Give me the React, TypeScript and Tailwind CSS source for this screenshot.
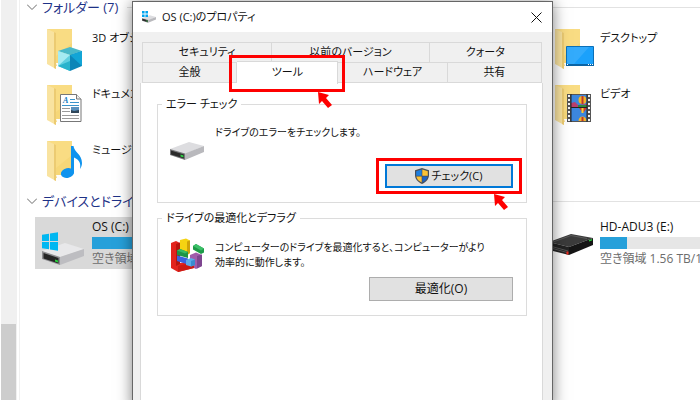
import React, { useState } from 'react'

const FolderBase = () => (
  <>
    <path d="M6 3h25v35l-16 2z" fill="#f6d778" />
    <path d="M6 3h25v14L15 30z" fill="#fbe08a" opacity=".6" />
    <path d="M15 37h16v1l-14 5z" fill="#fdfdfd" />
    <path d="M6 3l9 4v36l-9-5z" fill="#f9e3a0" />
    <path d="M13 6l2 1v36l-2-1z" fill="#eccb72" />
  </>
)

const CubeIcon = () => (
  <svg viewBox="0 0 48 48" className="size-12 shrink-0" aria-hidden="true">
    <FolderBase />
    <path d="M17 25l12-4 12 4-12 4z" fill="#49b9c9" />
    <path d="M17 25l12 4v16l-12-5z" fill="#5fcfe0" />
    <path d="M17 25l12 4-12 11z" fill="#a5ebf2" />
    <path d="M41 25l-12 4v16l12-5z" fill="#0d86b8" />
    <path d="M29 29l12-4v15z" fill="#12a5d6" />
    <path d="M17 40l12-5v10z" fill="#29b3cc" />
  </svg>
)

const DocumentIcon = () => (
  <svg viewBox="0 0 48 48" className="size-12 shrink-0" aria-hidden="true">
    <FolderBase />
    <path d="M19.500 12.500h16l4.500 4.500v22.500h-20.500z" fill="#fff" stroke="#777" />
    <path d="M35.500 12.500v4.500h4.500" fill="#eee" stroke="#777" />
    <text x="22" y="21" fontSize="8" fontStyle="italic" fontWeight="bold" fontFamily="Liberation Serif, serif" fill="#1279bd">A</text>
    <path d="M29 17.500h5M29 20.500h9M21 23.500h17" stroke="#3b95cc" />
    <path d="M21 26.500h8M21 29.500h8M21 33.500h17M21 36.500h17" stroke="#9a9a9a" />
    <path d="M30 25h8v6h-8z" fill="#5a91bd" />
    <path d="M30 28l3 1 5-1v3h-8z" fill="#30465a" />
  </svg>
)

const MusicIcon = () => (
  <svg viewBox="0 0 48 48" className="size-12 shrink-0" aria-hidden="true">
    <FolderBase />
    <ellipse cx="26.500" cy="35" rx="6.700" ry="4.800" transform="rotate(-12 26.500 35)" fill="#0f93ee" />
    <path d="M30 8h2.500c.5 6 8.500 8 8.500 17 0 2-.6 4-2 6 1-6-.5-9-6-11.500v15.500h-3z" fill="#0f93ee" />
  </svg>
)

const DesktopIcon = () => (
  <svg viewBox="0 0 48 48" className="size-12 shrink-0" aria-hidden="true">
    <FolderBase />
    <path d="M17.500 20.500h27v19h-27z" fill="#1ba1fb" stroke="#0b70b8" />
    <path d="M18 21h22L25 38h-7z" fill="#44b2fd" opacity=".6" />
    <path d="M17 38h28v2h-28z" fill="#0b64a5" />
    <path d="M18 38.500h1M39 38.500h1M41 38.500h1M43 38.500h1" stroke="#fff" />
  </svg>
)

const VideoIcon = () => (
  <svg viewBox="0 0 48 48" className="size-12 shrink-0" aria-hidden="true">
    <FolderBase />
    <path d="M18 12h24v28h-24z" fill="#555" />
    <path d="M22 13h16v12h-16zM22 26h16v13h-16z" fill="#3c86dd" />
    <path d="M22 21l4-1 3 3 9-1v3h-16z" fill="#b83f6d" />
    <path d="M29 23h9v2h-9z" fill="#2d8a3c" />
    <circle cx="33.500" cy="18" r="4" fill="#f0b52b" />
    <path d="M32.500 14h2v8h-2z" fill="#c0362c" />
    <path d="M30 26h8l-4 5z" fill="#cf3c2b" />
    <path d="M32.500 26h2v5h-2z" fill="#f4d03a" />
    <path d="M29.500 39c0-6 8-6 8 0z" fill="#f0b52b" />
    <path d="M32.500 35h2v4h-2z" fill="#c0362c" />
    <path d="M20 13v27M40 13v27" stroke="#f2f2f2" strokeWidth="2" strokeDasharray="2 2" />
    <path d="M22 12v28M38 12v28M22 25.500h16" stroke="#222" />
  </svg>
)

const WindowsDriveIcon = () => (
  <svg viewBox="0 0 48 48" className="size-12 shrink-0" aria-hidden="true">
    <path d="M1 32L24 24l19 6-24 8z" fill="#e8e8ea" />
    <path d="M1 32l18 6v8L1 40z" fill="#8d8d90" />
    <path d="M19 38l24-8v7L19 46z" fill="#bdbdc1" />
    <path d="M2.500 34l15 5v5.500l-15-5z" fill="#252525" />
    <path d="M14 40.500l3 1v2l-3-1z" fill="#29d33d" />
    <path d="M1 15.700l7-1V22H1zM9 14.500l8-1.300V22H9zM1 23h7v7.300l-7-1zM9 23h8v8.700l-8-1.200z" fill="#00b7f1" />
  </svg>
)

const ExternalDriveIcon = () => (
  <svg viewBox="0 0 48 48" className="size-12 shrink-0" aria-hidden="true">
    <path d="M0 23l22-8 22 4-24 9z" fill="#3b3b3b" />
    <path d="M0 23l20 5v8L0 31z" fill="#232323" />
    <path d="M20 28l24-9v7l-24 10z" fill="#151515" />
    <path d="M1 27l18 5M2 29l16 4.500" stroke="#555" />
    <path d="M4 23l18-6.500 16 3" stroke="#5a5a5a" fill="none" />
    <path d="M17.500 32.500h2v3h-2z" fill="#f0281e" />
    <path d="M40 21l3-1v1.500l-3 1z" fill="#27c93b" />
  </svg>
)

const PlainDriveIcon = ({ className }: { className: string }) => (
  <svg viewBox="0 0 34 18" className={className} aria-hidden="true">
    <path d="M0 7L19 0l15 4-19 8z" fill="#dddde0" />
    <path d="M0 7l15 4.500V18L0 13z" fill="#77777a" />
    <path d="M15 11.500L34 4v6l-19 8z" fill="#b9b9bd" />
    <path d="M1 8.500l13 4v4l-13-4z" fill="#2b2b2b" />
    <path d="M10.500 12.500l3 1v2l-3-1z" fill="#2fd046" />
  </svg>
)

const DefragIcon = () => (
  <svg viewBox="0 0 34 34" className="size-[34px]" aria-hidden="true">
    <path d="M10 2l6-1.500 4 2V15l-4 3-6-3z" fill="#f5d312" />
    <path d="M17 3.500l3-1V15l-3 2z" fill="#cfa309" />
    <path d="M20 17l6-2.500 6 2.500v11l-6 3-6-3z" fill="#a15bab" />
    <path d="M27 18l5-1.500V28l-5 2.500z" fill="#7e4690" />
    <path d="M1 5l5-2 4 2v20l14-2v7L8 34l-7-4z" fill="#e3241d" />
    <path d="M6 6l4-1.500V26l-4 2z" fill="#b8150f" />
    <path d="M8 28l16-4v6L8 34z" fill="#cc1b15" />
    <path d="M7 12.500l3-1.500 8 3v6l-11-3z" fill="#1b9447" />
    <path d="M7 12.500l3-1.500 8 3-3 1.500z" fill="#37bb62" />
    <path d="M7 17.500l11 3v6L7 23z" fill="#3b62e0" />
    <path d="M16 22l5-2 4 1.500V27l-4 1.500-5-1.500z" fill="#5aabea" />
    <path d="M21 23l4-1.500V27l-4 1.500z" fill="#3a8bd0" />
    <path d="M23 8l3-2 8 4.500v4L31 16l-8-4.500z" fill="#1d9a48" />
    <path d="M23 8l3-2 8 4.500-3 2z" fill="#3cc068" />
  </svg>
)

const ShieldIcon = () => (
  <svg viewBox="0 0 14 16" className="h-4 w-3.5" aria-hidden="true">
    <path d="M7 0l7 2.300V7c0 4-2.600 7-7 9C2.600 14 0 11 0 7V2.300z" fill="#4b4f57" />
    <path d="M6.700 1.400V7.800H1.200V3.200z" fill="#1e7fe0" />
    <path d="M7.300 1.400V7.800h5.500V3.200z" fill="#fcc235" />
    <path d="M1.300 8.400h5.400v6C3.600 13 1.800 11 1.300 8.400z" fill="#fcc235" />
    <path d="M12.700 8.400H7.300v6c3.100-1.400 4.900-3.400 5.400-6z" fill="#1e63c4" />
  </svg>
)

const Arrow = ({ className }: { className: string }) => (
  <svg viewBox="0 0 16 16" className={className} aria-hidden="true">
    <path d="M1 0l11 3-3 3 6 7-4 3-6-7-3 3z" fill="#fe0000" />
  </svg>
)

const GroupHeader = ({ children }: { children: React.ReactNode }) => (
  <h2 className="-ml-2 flex items-center gap-[5px] text-[13px] leading-[14px] text-[#1e3287] whitespace-nowrap">
    <svg viewBox="0 0 10 6" className="h-1.5 w-2.5" fill="none" stroke="#6b6b6b" aria-hidden="true">
      <path d="M0 .5l5 5 5-5" />
    </svg>
    {children}
    <span className="ml-1 h-px grow bg-[#e2e2e2]"></span>
  </h2>
)

const Folder = ({ icon, name }: { icon: React.ReactNode; name: string }) => (
  <li className="flex h-14 gap-[3px] pl-1.5 pt-1">
    {icon}
    <span className="pt-1 text-[11px] leading-4 whitespace-nowrap">{name}</span>
  </li>
)

type DriveProps = { icon: React.ReactNode; name: string; used: number; free: string; selected?: boolean }

const Drive = ({ icon, name, used, free, selected }: DriveProps) => (
  <li className={selected ? 'flex h-[52px] gap-[3px] bg-[#d9d9d9] pl-1.5 pt-0.5' : 'flex h-[52px] gap-[3px] pl-1.5 pt-0.5'}>
    {icon}
    <div className="w-[190px] whitespace-nowrap">
      <div className="leading-4">{name}</div>
      <div className="mt-0.5 h-3 bg-[#e6e6e6]">
        <div className="h-full bg-[#26a0da]" style={{ width: `${used}%` }}></div>
      </div>
      <div className="mt-0.5 leading-4 text-[#6d6d6d]">{free}</div>
    </div>
  </li>
)

const tabBase = 'relative flex items-center justify-center border-r border-[#d9d9d9] '

const App = () => {
  const [tab, setTab] = useState('ツール')

  const tabButton = (name: string) => (
    <button
      key={name}
      type="button"
      role="tab"
      aria-selected={tab === name}
      onClick={() => setTab(name)}
      className={
        tab === name
          ? tabBase + 'z-10 -mt-0.5 -mb-px border-t bg-white pb-0.5'
          : tabBase + 'border-b bg-[#f0f0f0]'
      }
    >
      {name}
      {name === 'ツール' && (
        <>
          <span className="pointer-events-none absolute -left-2 -right-2 -top-[7px] -bottom-2 border-3 border-[#fe0000]"></span>
          <Arrow className="absolute left-20 top-[30px] size-4" />
        </>
      )}
    </button>
  )

  return (
    <div className="relative flex h-screen overflow-hidden bg-white font-['Open_Sans','Noto_Sans_CJK_JP',sans-serif] text-xs text-[#111] [font-feature-settings:'palt']">
      <aside className="flex w-[17px] shrink-0 flex-col border-l border-white bg-[#f0f0f0]">
        <div className="mr-px mt-[324px] grow bg-[#cdcdcd]"></div>
      </aside>
      <main className="ml-0.5 min-w-0 grow overflow-hidden border-l border-[#f0f0f0] pl-[15px]">
        <GroupHeader>フォルダー (7)</GroupHeader>
        <ul className="mt-2 grid grid-cols-[254px_254px_254px]">
          <Folder icon={<CubeIcon />} name="3D オブジェクト" />
          <div className="col-start-3"><Folder icon={<DesktopIcon />} name="デスクトップ" /></div>
          <Folder icon={<DocumentIcon />} name="ドキュメント" />
          <div className="col-start-3"><Folder icon={<VideoIcon />} name="ビデオ" /></div>
          <Folder icon={<MusicIcon />} name="ミュージック" />
        </ul>
        <div className="mt-1">
          <GroupHeader>デバイスとドライブ (4)</GroupHeader>
        </div>
        <ul className="mt-[9px] grid grid-cols-[254px_254px_254px]">
          <Drive icon={<WindowsDriveIcon />} name="OS (C:)" used={60} free="空き領域 180 GB/460 GB" selected />
          <div className="col-start-3">
            <Drive icon={<ExternalDriveIcon />} name="HD-ADU3 (E:)" used={14} free="空き領域 1.56 TB/1.81 TB" />
          </div>
        </ul>
      </main>

      <section
        role="dialog"
        aria-label="OS (C:)のプロパティ"
        className="absolute -bottom-2 left-[132px] top-px w-[421px] border border-[#666] bg-[#f0f0f0] text-[11px] shadow-[0_2px_14px_rgba(0,0,0,0.5)]"
      >
        <header className="flex h-[30px] items-center bg-white pl-[9px] pr-2.5">
          <span className="relative mr-1.5 h-3 w-3.5">
            <PlainDriveIcon className="mt-1 h-2 w-3.5" />
            <svg viewBox="0 0 6 6" className="absolute left-0 top-0 size-1.5" fill="#00a4ef" aria-hidden="true">
              <path d="M0 0h2.600v2.600H0zM3.400 0H6v2.600H3.400zM0 3.400h2.600V6H0zM3.400 3.400H6V6H3.400z" />
            </svg>
          </span>
          <h1>OS (C:)のプロパティ</h1>
          <button type="button" aria-label="閉じる" className="ml-auto">
            <svg viewBox="0 0 11 11" className="size-[11px]" stroke="#111" aria-hidden="true">
              <path d="M.5 .5l10 10M10.500 .5l-10 10" />
            </svg>
          </button>
        </header>

        <div className="pl-[7px] pr-[9px] pt-2.5">
          <div role="tablist" className="ml-0.5 mr-px border-l border-t border-[#d9d9d9]">
            <div className="grid h-5 grid-cols-[129fr_157fr_112fr]">
              {['セキュリティ', '以前のバージョン', 'クォータ'].map(tabButton)}
            </div>
            <div className="grid h-5 grid-cols-[94fr_101fr_109fr_94fr]">
              {['全般', 'ツール', 'ハードウェア', '共有'].map(tabButton)}
            </div>
          </div>

          <div role="tabpanel" className="h-[400px] border border-t-0 border-[#d9d9d9] bg-white pl-4 pr-[15px] pt-[13px]">
            <fieldset className="h-[107px] min-w-0 border border-[#dcdcdc] pl-3 pr-[13px]">
              <legend className="-ml-2 px-1 leading-4">エラー チェック</legend>
              <div className="flex h-[52px] gap-[11px]">
                <PlainDriveIcon className="mt-[30px] h-[18px] w-[34px]" />
                <p className="pt-3 text-[10px] leading-4">ドライブのエラーをチェックします。</p>
              </div>
              <div className="flex justify-end">
                <button
                  type="button"
                  className="relative flex h-6 w-32 items-center justify-center border-2 border-[#0078d7] bg-[#e1e1e1]"
                >
                  <ShieldIcon />
                  <span className="ml-0.5">チェック(C)</span>
                  <span className="pointer-events-none absolute -inset-x-[11px] -inset-y-2 border-3 border-[#fe0000]"></span>
                  <Arrow className="absolute left-[106px] top-7 size-4" />
                </button>
              </div>
            </fieldset>

            <fieldset className="mt-[7px] h-[106px] min-w-0 border border-[#dcdcdc] pl-3 pr-[13px]">
              <legend className="-ml-2 px-1 leading-4">ドライブの最適化とデフラグ</legend>
              <div className="flex h-[51px] gap-[11px]">
                <div className="mt-3 shrink-0"><DefragIcon /></div>
                <p className="pt-3.5 text-[10px] leading-[15px] whitespace-nowrap">
                  コンピューターのドライブを最適化すると、コンピューターがより
                  <br />
                  効率的に動作します。
                </p>
              </div>
              <div className="flex justify-end">
                <button type="button" className="h-6 w-36 border border-[#adadad] bg-[#e1e1e1] text-xs">
                  最適化(O)
                </button>
              </div>
            </fieldset>
          </div>
        </div>
      </section>
    </div>
  )
}

export default App
